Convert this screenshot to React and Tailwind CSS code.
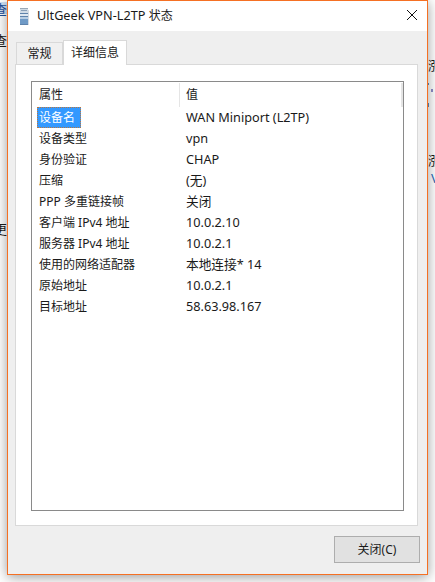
const ROWS = [
  ["设备名", "WAN Miniport (L2TP)"],
  ["设备类型", "vpn"],
  ["身份验证", "CHAP"],
  ["压缩", "(无)"],
  ["PPP 多重链接帧", "关闭"],
  ["客户端 IPv4 地址", "10.0.2.10"],
  ["服务器 IPv4 地址", "10.0.2.1"],
  ["使用的网络适配器", "本地连接* 14"],
  ["原始地址", "10.0.2.1"],
  ["目标地址", "58.63.98.167"],
];

const FONT = "font-['Noto_Sans','Noto_Sans_CJK_SC',sans-serif]";

function ServerIcon() {
  return (
    <svg width="9" height="17" viewBox="0 0 9 17" className="shrink-0">
      <rect width="8" height="17" fill="#8fb0d2" />
      <rect width="8" height="1" fill="#9aa9b8" />
      <rect y="1" width="8" height="4" fill="#d0dbe6" />
      <rect x="1" y="2" width="6" height="1" fill="#8aa0b8" />
      <rect y="5" width="8" height="1" fill="#5f83ab" />
      <rect y="6" width="8" height="2" fill="#dfe8f1" />
      <rect y="8" width="8" height="1" fill="#5f83ab" />
      <rect y="9" width="8" height="2" fill="#b7cde3" />
      <rect y="11" width="8" height="6" fill="#6f9ac6" />
      <rect y="16" width="8" height="1" fill="#5f83ab" />
      <rect x="8" y="2" width="1" height="15" fill="#d5dbe2" />
    </svg>
  );
}

function CloseIcon() {
  return (
    <svg width="10" height="10" viewBox="0 0 10 10" fill="none" stroke="#111" strokeWidth="1" className="block">
      <path d="M0 0l10 10M10 0l-10 10" />
    </svg>
  );
}

export default function App() {
  return (
    <div className={`relative h-[582px] w-[435px] overflow-hidden bg-white text-[13px] text-[#1a1a1a] ${FONT}`}>
      {/* windows behind the dialog */}
      <div className="absolute left-0 top-[2px] h-[12px] w-[8px] bg-[#cfe0f5]" />
      <span className="absolute left-[-6px] top-[0px] text-[13px] text-[#1f4f9a]">查</span>
      <span className="absolute left-[-6px] top-[31px] text-[13px]">查</span>
      <span className="absolute left-[-6px] top-[220px] text-[13px]">更</span>
      <span className="absolute left-[428px] top-[56px] text-[13px]">涨</span>
      <span className="absolute left-[428px] top-[151px] text-[13px]">涨</span>
      <span className="absolute left-[431px] top-[169px] text-[13px] text-[#2a6ab8]">V</span>
      <span className="absolute left-[428px] top-[83px] h-[2px] w-[1px] bg-[#5f8fc0]" />
      <span className="absolute left-[428px] top-[103px] h-[4px] w-[1px] bg-[#5f8fc0]" />
      <span className="absolute left-[431px] top-[89px] h-[3px] w-[2px] bg-[#8d8dc8]" />

      <div className="relative ml-[7px] flex h-[575px] w-[421px] flex-col border border-[#f57023] bg-[#efefef] shadow-[0_2px_12px_rgba(0,0,0,0.4)]">
        <div className="flex h-[30px] shrink-0 items-center bg-white pl-[12px] pr-[10px]">
          <ServerIcon />
          <span className="ml-[8px] text-[12.7px]">
            UltGeek VPN-L2TP <span className="text-[12px]">状态</span>
          </span>
          <span className="mb-[2px] ml-auto">
            <CloseIcon />
          </span>
        </div>

        <div className="flex flex-1 flex-col pl-[7px] pr-[9px] pt-[9px]">
          <div className="flex h-[24px] items-end pl-[1px]">
            <div className="flex h-[22px] w-[47px] items-center justify-center border border-b-0 border-[#d9d9d9] bg-[#f0f0f0] text-[12px]">
              常规
            </div>
            <div className="relative z-10 -mb-px flex h-[25px] w-[64px] items-center justify-center border border-b-0 border-[#d9d9d9] bg-white text-[12px]">
              详细信息
            </div>
          </div>

          <div className="h-[462px] border border-[#d9d9d9] bg-white pb-[14px] pl-[15px] pr-[13px] pt-[16px]">
            <div className="h-full border border-[#8a8a8a]">
              <div className="flex h-[25px] items-stretch pt-[1px]">
                <div className="flex w-[148px] items-center border-r border-[#e5e5e5] pl-[7px] text-[12px]">属性</div>
                <div className="flex flex-1 items-center border-r-2 border-[#e5e5e5] pl-[6px] text-[12px]">值</div>
              </div>
              {ROWS.map(([name, value], i) => (
                <div key={name} className="flex h-[21px] items-center">
                  <div className="w-[147px] pl-[5px] text-[12px]">
                    <span
                      className={
                        i === 0
                          ? "flex h-[21px] w-[44px] items-center border border-dotted border-[#b9773f] bg-[#3399ff] pl-[1px] text-white"
                          : "pl-[2px]"
                      }
                    >
                      {name}
                    </span>
                  </div>
                  <div className="pl-[7px] text-[12.7px]">{value}</div>
                </div>
              ))}
            </div>
          </div>

          <div className="mt-[10px] flex justify-end">
            <button className="mr-[-2px] h-[27px] w-[86px] border border-[#adadad] bg-[#e1e1e1] text-[12px] text-[#1a1a1a]">
              关闭(C)
            </button>
          </div>
        </div>
      </div>
    </div>
  );
}
